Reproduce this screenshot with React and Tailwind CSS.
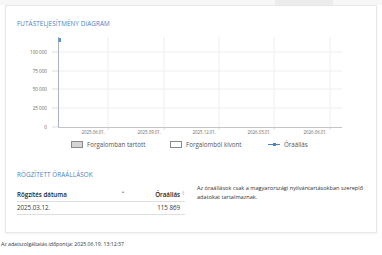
import React from 'react';

const yTicks = [
  { label: '100 000', y: 17 },
  { label: '75 000', y: 36 },
  { label: '50 000', y: 54 },
  { label: '25 000', y: 73 },
  { label: '0', y: 92 },
];

const xTicks = [
  { label: '2025.06.01.', x: 91 },
  { label: '2025.09.01.', x: 147 },
  { label: '2025.12.01.', x: 202 },
  { label: '2026.03.01.', x: 257 },
  { label: '2026.06.01.', x: 313 },
];

const Chart = () => (
  <svg width="340" height="100" viewBox="0 0 340 100" className="block">
    {yTicks.map((t) => (
      <g key={t.label}>
        {t.label !== '0' && <line x1="41" x2="325" y1={t.y} y2={t.y} stroke="#eeeeee" strokeWidth="1" />}
        <line x1="35" x2="41" y1={t.y} y2={t.y} stroke="#c8c8c8" strokeWidth="0.6" />
        <text x="30" y={t.y + 1.6} textAnchor="end" fontSize="4.6" fill="#666" fontFamily="Open Sans, sans-serif">
          {t.label}
        </text>
      </g>
    ))}
    {xTicks.map((t) => (
      <g key={t.label}>
        <line x1={t.x} x2={t.x} y1="2" y2="92" stroke="#eeeeee" strokeWidth="1" />
        <line x1={t.x} x2={t.x} y1="92" y2="95" stroke="#c8c8c8" strokeWidth="0.6" />
        <text x={t.x - 3} y="99" textAnchor="end" fontSize="4.4" fill="#666" fontFamily="Open Sans, sans-serif">
          {t.label}
        </text>
      </g>
    ))}
    <line x1="41.5" x2="41.5" y1="2" y2="92" stroke="#a8b4c4" strokeWidth="1" />
    <line x1="41" x2="325" y1="92.5" y2="92.5" stroke="#c4c4c4" strokeWidth="1" />
    <rect x="41.5" y="3" width="2.5" height="4" fill="#5a93d1" />
  </svg>
);

const LegendBox = ({ fill }) => (
  <span className={`inline-block h-[7px] w-[12px] border border-[#8a8a8a] ${fill}`} />
);

export default function App() {
  return (
    <div className="min-h-[255px] bg-white font-['Open_Sans',sans-serif] text-[#333]">
      <div className="flex h-[5px] bg-[#f7f7f7]">
        <div className="ml-[275px] h-full w-[58px] bg-[#ececec]" />
      </div>
      <div className="mx-[5px] border border-[#e8e8e8] bg-white px-[11px] pb-[17px] pt-[13px] shadow-[0_1px_2px_rgba(0,0,0,0.06)]">
        <h2 className="text-[6.3px] leading-[10px] tracking-[0.1px] text-[#4a82c4]">FUTÁSTELJESÍTMÉNY DIAGRAM</h2>
        <div className="mt-[6px]">
          <Chart />
        </div>
        <div className="mt-[5px] flex h-[10px] items-center text-[6.2px] text-[#555]">
          <div className="ml-[54px] flex items-center gap-[4px]">
            <LegendBox fill="bg-[#d4d4d4]" />
            <span className="w-[57px] whitespace-nowrap">Forgalomban tartott</span>
          </div>
          <div className="ml-[26px] flex items-center gap-[4px]">
            <LegendBox fill="bg-white" />
            <span className="w-[52px] whitespace-nowrap">Forgalomból kivont</span>
          </div>
          <div className="ml-[30px] flex items-center gap-[4px]">
            <span className="relative inline-block h-[7px] w-[12px]">
              <span className="absolute left-0 top-[3px] h-[1px] w-[12px] bg-[#4a86c5]" />
              <span className="absolute left-[4.5px] top-[2px] h-[3px] w-[3px] bg-[#4a86c5]" />
            </span>
            <span>Óraállás</span>
          </div>
        </div>
        <h2 className="mt-[20px] text-[6.3px] leading-[10px] tracking-[0.1px] text-[#4a82c4]">RÖGZÍTETT ÓRAÁLLÁSOK</h2>
        <div className="mt-[8px] flex">
          <table className="w-[168px] shrink-0 border-collapse text-[6.2px]">
            <thead>
              <tr className="h-[13px] border-b border-[#dedede]">
                <th className="relative p-0 text-left font-semibold text-[#222]">
                  Rögzítés dátuma
                  <span className="absolute left-[104px] top-[1px] text-[4px] text-[#999]">▲</span>
                </th>
                <th className="relative p-0 pr-[5px] text-right font-semibold text-[#222]">
                  Óraállás
                  <span className="absolute right-[0px] top-[2px] text-[5px] font-normal text-[#bbb]">⇕</span>
                </th>
              </tr>
            </thead>
            <tbody>
              <tr className="h-[13px] border-b border-[#dedede]">
                <td className="p-0">2025.03.12.</td>
                <td className="p-0 pr-[5px] text-right">115 869</td>
              </tr>
            </tbody>
          </table>
          <p className="ml-[12px] mt-[-4px] w-[174px] text-[5.6px] leading-[9px] text-[#333]">
            Az óraállások csak a magyarországi nyilvántartásokban szereplő adatokat tartalmaznak.
          </p>
        </div>
      </div>
      <p className="mt-[7px] pl-[1px] text-[5.2px] leading-[8px] text-[#333]">
        Az adatszolgáltatás időpontja: 2025.06.19. 13:12:37
      </p>
    </div>
  );
}
